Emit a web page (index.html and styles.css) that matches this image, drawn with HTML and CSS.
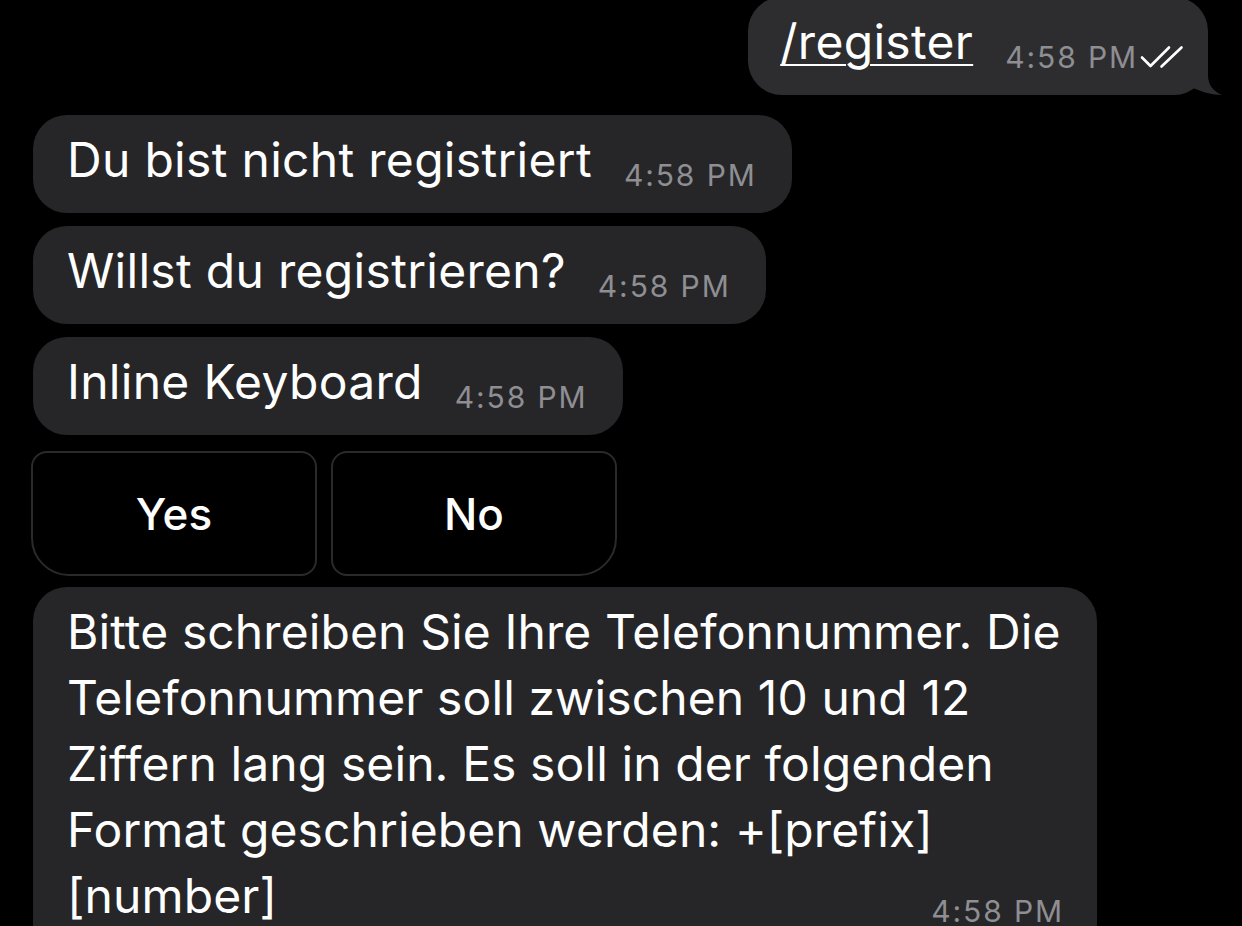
FILE: index.html
```html
<!DOCTYPE html>
<html lang="de">
<head>
<meta charset="utf-8">
<title>Chat</title>
<link rel="stylesheet" href="styles.css">
</head>
<body>
<div class="chat">
  <div class="row out">
    <div class="bubble bubble-out">
      <span class="text link">/register</span><span class="time">4:58 PM<svg class="checks" width="44" height="26" viewBox="0 0 44 26"><path d="M2 12.5 L10.5 21 L29 2.5" /><path d="M21.5 21.5 L41.5 2.5" /></svg></span>
      <svg class="tail" width="40" height="40" viewBox="0 0 40 40"><path d="M20 0 V20 C20 30 25 36 34 40 C25 40 13 37 3 32 L0 32 V0 Z"/></svg>
    </div>
  </div>
  <div class="row">
    <div class="bubble"><span class="text">Du bist nicht registriert</span><span class="time">4:58 PM</span></div>
  </div>
  <div class="row">
    <div class="bubble"><span class="text">Willst du registrieren?</span><span class="time">4:58 PM</span></div>
  </div>
  <div class="row">
    <div class="bubble"><span class="text">Inline Keyboard</span><span class="time">4:58 PM</span></div>
  </div>
  <div class="keyboard">
    <button class="key key-left">Yes</button>
    <button class="key key-right">No</button>
  </div>
  <div class="row">
    <div class="bubble bubble-wide"><span class="text">Bitte schreiben Sie Ihre Telefonnummer. Die Telefonnummer soll zwischen 10 und 12 Ziffern lang sein. Es soll in der folgenden Format geschrieben werden: +[prefix] [number]</span><span class="time time-end">4:58 PM</span></div>
  </div>
</div>
</body>
</html>
```

FILE: styles.css
```css
html, body {
  margin: 0;
  padding: 0;
  background: #000;
  height: 100%;
  overflow: hidden;
}

body {
  font-family: Inter, "Noto Sans", "Liberation Sans", sans-serif;
  color: #fff;
}

.chat {
  display: flex;
  flex-direction: column;
  padding: 0 34px 0 33px;
  margin-top: -3px;
}

.row {
  display: flex;
  margin-bottom: 13px;
}

.row.out {
  justify-content: flex-end;
  margin-bottom: 20px;
}

.bubble {
  position: relative;
  background: #262628;
  border-radius: 34px;
  padding: 12px 35px 20px 34px;
  font-size: 48px;
  line-height: 66px;
  letter-spacing: 0.3px;
  white-space: nowrap;
}

.bubble-out {
  background: #2d2d2f;
  padding-left: 32px;
  padding-right: 24px;
}

.link {
  text-decoration: underline;
  text-decoration-thickness: 2px;
  text-underline-offset: 5px;
}

.time {
  display: inline-block;
  font-size: 30px;
  letter-spacing: 1.9px;
  color: #8e8e93;
  margin-left: 32px;
  vertical-align: -9px;
  line-height: 30px;
}

.checks {
  vertical-align: -3px;
  margin-left: 2px;
}

.checks path {
  fill: none;
  stroke: #fff;
  stroke-width: 2.6;
  stroke-linecap: round;
  stroke-linejoin: round;
}

.tail {
  position: absolute;
  right: -20px;
  bottom: 0;
}

.tail path {
  fill: #2d2d2f;
}

.keyboard {
  display: flex;
  gap: 14px;
  margin: 3px 0 11px -2px;
}

.key {
  width: 286px;
  height: 125px;
  background: #000;
  border: 2px solid #2a2a2c;
  color: #fff;
  font-family: Inter, "Noto Sans", "Liberation Sans", sans-serif;
  font-size: 44px;
  font-weight: 500;
  border-radius: 16px;
  padding: 0;
}

.key-left {
  border-bottom-left-radius: 38px;
}

.key-right {
  border-bottom-right-radius: 38px;
}

.bubble-wide {
  white-space: normal;
  letter-spacing: 0.1px;
  max-width: 995px;
  padding-bottom: 30px;
}

.time-end {
  float: right;
  margin-top: 33px;
  margin-right: -2px;
}
```
